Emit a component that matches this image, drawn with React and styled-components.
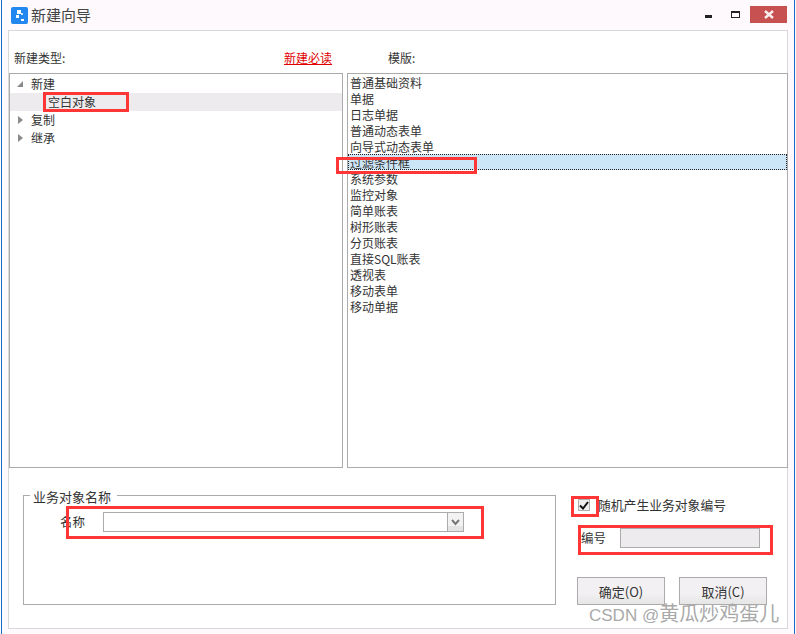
import React from 'react';
import styled, { createGlobalStyle } from 'styled-components';

const GlobalStyle = createGlobalStyle`
  html, body {
    margin: 0;
    padding: 0;
    background: #fff;
  }
  * {
    box-sizing: border-box;
  }
`;

const Dialog = styled.div`
  position: relative;
  width: 796px;
  height: 634px;
  display: flex;
  flex-direction: column;
  background: #fdf9fd;
  padding: 0 1px;
  font-family: "Noto Sans CJK SC", "Liberation Sans", sans-serif;
  font-size: 12px;
  color: #333;
  overflow: hidden;

  &::before,
  &::after {
    content: '';
    position: absolute;
    top: 0;
    bottom: 0;
    width: 1px;
    background: #1270c4;
  }
  &::before {
    left: 1px;
  }
  &::after {
    right: 1px;
  }
`;

const TitleBar = styled.div`
  height: 30px;
  flex: none;
  display: flex;
  align-items: flex-start;
  padding-left: 10px;
`;

const AppIcon = styled.svg`
  width: 17px;
  height: 17px;
  margin-top: 7px;
  flex: none;
`;

const Title = styled.div`
  margin: 5px 0 0 3px;
  font-size: 15px;
  line-height: 20px;
  color: #444;
`;

const WindowButtons = styled.div`
  margin-left: auto;
  display: flex;
  align-items: flex-start;
  padding-right: 8px;
`;

const MinButton = styled.div`
  width: 7px;
  height: 3px;
  margin-top: 15px;
  background: #222;
`;

const MaxButton = styled.div`
  width: 9px;
  height: 7px;
  margin: 11px 0 0 19px;
  border: 1px solid #222;
  border-top-width: 2px;
`;

const CloseButton = styled.div`
  width: 37px;
  height: 17px;
  margin: 6px 0 0 10px;
  background: #c75050;
  display: flex;
  align-items: center;
  justify-content: center;
`;

const Panel = styled.div`
  flex: 1;
  margin: 0 7px 5px 7px;
  background: #fff;
  border: 1px solid #d8d8d8;
  display: flex;
  flex-direction: column;
`;

const Headers = styled.div`
  height: 42px;
  flex: none;
  display: grid;
  grid-template-columns: 339px 1fr;
  align-items: end;
  padding: 0 0 7px 5px;
  line-height: 16px;
`;

const HeaderLeft = styled.div`
  display: flex;
  justify-content: space-between;
  padding-right: 21px;
`;

const ReadFirst = styled.a`
  color: #e00000;
  text-decoration: underline;
`;

const HeaderRight = styled.div`
  padding-left: 35px;
`;

const Lists = styled.div`
  height: 395px;
  flex: none;
  display: grid;
  grid-template-columns: 334px 1fr;
  column-gap: 4px;
`;

const Box = styled.div`
  border: 1px solid #ababab;
  background: #fff;
`;

const TreeBox = styled(Box)`
  padding-top: 1px;
`;

const TemplateBox = styled(Box)`
  margin-right: -1px;
`;

const TreeRow = styled.div`
  height: 18px;
  display: flex;
  align-items: center;
  padding-left: ${(p) => p.$indent}px;
  background: ${(p) => (p.$selected ? '#eeebee' : 'transparent')};
  line-height: 18px;
`;

const Arrow = styled.svg`
  width: 8px;
  height: 8px;
  margin-right: 7px;
  flex: none;
`;

const TemplateRow = styled.div`
  height: 16px;
  line-height: 18px;
  padding-left: 2px;
  color: #333;
  ${(p) =>
    p.$selected &&
    `
    background: #cde6f7;
    outline: 1px dotted #222;
    outline-offset: -1px;
  `}
`;

const Bottom = styled.div`
  flex: 1;
  display: flex;
  padding: 20px 0 0 14px;
`;

const NameGroup = styled.fieldset`
  width: 533px;
  height: 117px;
  margin: 0;
  padding: 0;
  border: 1px solid #ababab;
  border-radius: 0;
`;

const GroupTitle = styled.legend`
  margin-left: 6px;
  padding: 0 6px 0 3px;
  font-size: 13px;
  line-height: 14px;
  position: relative;
  top: 2px;
`;

const NameRow = styled.div`
  display: flex;
  align-items: center;
  margin-top: 9px;
  padding-left: 36px;
`;

const FieldLabel = styled.label`
  font-size: 12.5px;
  line-height: 22px;
`;

const Combo = styled.div`
  width: 361px;
  height: 20px;
  margin-left: 18px;
  display: flex;
  justify-content: flex-end;
  border: 1px solid #ababab;
  background: #fff;
`;

const ComboButton = styled.div`
  width: 16px;
  border-left: 1px solid #ababab;
  background: linear-gradient(#f2f2f2 70%, #e4e4e4 70%);
  display: flex;
  align-items: center;
  justify-content: center;
`;

const SidePanel = styled.div`
  width: 210px;
  margin-left: 21px;
  display: flex;
  flex-direction: column;
`;

const CheckRow = styled.div`
  display: flex;
  align-items: center;
  height: 20px;
  margin-top: 7px;
  padding-left: 1px;
`;

const CheckBox = styled.div`
  width: 12px;
  height: 12px;
  border: 1px solid #b0b0b0;
  background: #eee;
  display: flex;
  align-items: center;
  justify-content: center;
  flex: none;
`;

const CheckLabel = styled.span`
  margin-left: 8px;
  font-size: 12.8px;
  line-height: 20px;
`;

const NumberRow = styled.div`
  display: flex;
  align-items: center;
  height: 20px;
  margin: 13px 0 0 4px;
`;

const NumberInput = styled.div`
  width: 140px;
  height: 20px;
  margin-left: 14px;
  border: 1px solid #ababab;
  background: #eeebee;
`;

const ButtonRow = styled.div`
  display: flex;
  gap: 14px;
  margin-top: 29px;
`;

const DialogButton = styled.button`
  width: 88px;
  height: 28px;
  padding: 0;
  border: 1px solid #ababab;
  background: linear-gradient(#f2f0f2 60%, #e6e6e6);
  font: inherit;
  font-size: 13px;
  color: #333;
`;

const Mark = styled.div`
  position: absolute;
  left: ${(p) => p.$x}px;
  top: ${(p) => p.$y}px;
  width: ${(p) => p.$w}px;
  height: ${(p) => p.$h}px;
  border: 3px solid #ff3636;
  pointer-events: none;
`;

const Watermark = styled.div`
  position: absolute;
  left: 589px;
  top: 602px;
  font-size: 17px;
  line-height: 24px;
  white-space: nowrap;
  color: #a9a9a9;
  font-family: "Liberation Sans", "Noto Sans CJK SC", sans-serif;
`;

const WatermarkName = styled.span`
  font-size: 20px;
`;

const templates = [
  '普通基础资料',
  '单据',
  '日志单据',
  '普通动态表单',
  '向导式动态表单',
  '过滤条件框',
  '系统参数',
  '监控对象',
  '简单账表',
  '树形账表',
  '分页账表',
  '直接SQL账表',
  '透视表',
  '移动表单',
  '移动单据',
];

const marks = [
  { x: 43, y: 92, w: 86, h: 20 },
  { x: 336, y: 157, w: 141, h: 17 },
  { x: 66, y: 506, w: 418, h: 33 },
  { x: 571, y: 496, w: 28, h: 21 },
  { x: 578, y: 525, w: 195, h: 30 },
];

const OpenArrow = () => (
  <Arrow viewBox="0 0 8 8">
    <path d="M7 1v6H1z" fill="#8a8a8a" />
  </Arrow>
);

const ClosedArrow = () => (
  <Arrow viewBox="0 0 8 8">
    <path d="M2 0l5 4-5 4z" fill="#8a8a8a" />
  </Arrow>
);

const App = () => (
  <Dialog>
    <GlobalStyle />
    <TitleBar>
      <AppIcon viewBox="0 0 17 17">
        <rect width="17" height="17" rx="2" fill="#2287ee" />
        <rect x="6" y="3" width="4" height="4" fill="#fff" />
        <rect x="10" y="6" width="2" height="2" fill="#cfe6fc" />
        <rect x="5" y="8" width="3" height="3" fill="#fff" />
        <rect x="10" y="12" width="3" height="2" fill="#fff" />
      </AppIcon>
      <Title>新建向导</Title>
      <WindowButtons>
        <MinButton />
        <MaxButton />
        <CloseButton>
          <svg width="10" height="9" viewBox="0 0 10 9">
            <path d="M1 1l8 7M9 1L1 8" stroke="#fbeeee" strokeWidth="2.4" />
          </svg>
        </CloseButton>
      </WindowButtons>
    </TitleBar>
    <Panel>
      <Headers>
        <HeaderLeft>
          <span>新建类型:</span>
          <ReadFirst>新建必读</ReadFirst>
        </HeaderLeft>
        <HeaderRight>模版:</HeaderRight>
      </Headers>
      <Lists>
        <TreeBox>
          <TreeRow $indent={6}>
            <OpenArrow />
            新建
          </TreeRow>
          <TreeRow $indent={38} $selected>
            空白对象
          </TreeRow>
          <TreeRow $indent={6}>
            <ClosedArrow />
            复制
          </TreeRow>
          <TreeRow $indent={6}>
            <ClosedArrow />
            继承
          </TreeRow>
        </TreeBox>
        <TemplateBox>
          {templates.map((name, i) => (
            <TemplateRow key={name} $selected={i === 5}>
              {name}
            </TemplateRow>
          ))}
        </TemplateBox>
      </Lists>
      <Bottom>
        <NameGroup>
          <GroupTitle>业务对象名称</GroupTitle>
          <NameRow>
            <FieldLabel>名称</FieldLabel>
            <Combo>
              <ComboButton>
                <svg width="9" height="7" viewBox="0 0 9 7">
                  <path d="M1 1l3.5 4L8 1" fill="none" stroke="#777" strokeWidth="2" />
                </svg>
              </ComboButton>
            </Combo>
          </NameRow>
        </NameGroup>
        <SidePanel>
          <CheckRow>
            <CheckBox>
              <svg width="10" height="9" viewBox="0 0 10 9">
                <path d="M1 4.5l3 3L9 1" fill="none" stroke="#111" strokeWidth="2" />
              </svg>
            </CheckBox>
            <CheckLabel>随机产生业务对象编号</CheckLabel>
          </CheckRow>
          <NumberRow>
            <FieldLabel>编号</FieldLabel>
            <NumberInput />
          </NumberRow>
          <ButtonRow>
            <DialogButton>确定(O)</DialogButton>
            <DialogButton>取消(C)</DialogButton>
          </ButtonRow>
        </SidePanel>
      </Bottom>
    </Panel>
    {marks.map((m) => (
      <Mark key={m.x} $x={m.x} $y={m.y} $w={m.w} $h={m.h} />
    ))}
    <Watermark>
      CSDN @<WatermarkName>黄瓜炒鸡蛋儿</WatermarkName>
    </Watermark>
  </Dialog>
);

export default App;
